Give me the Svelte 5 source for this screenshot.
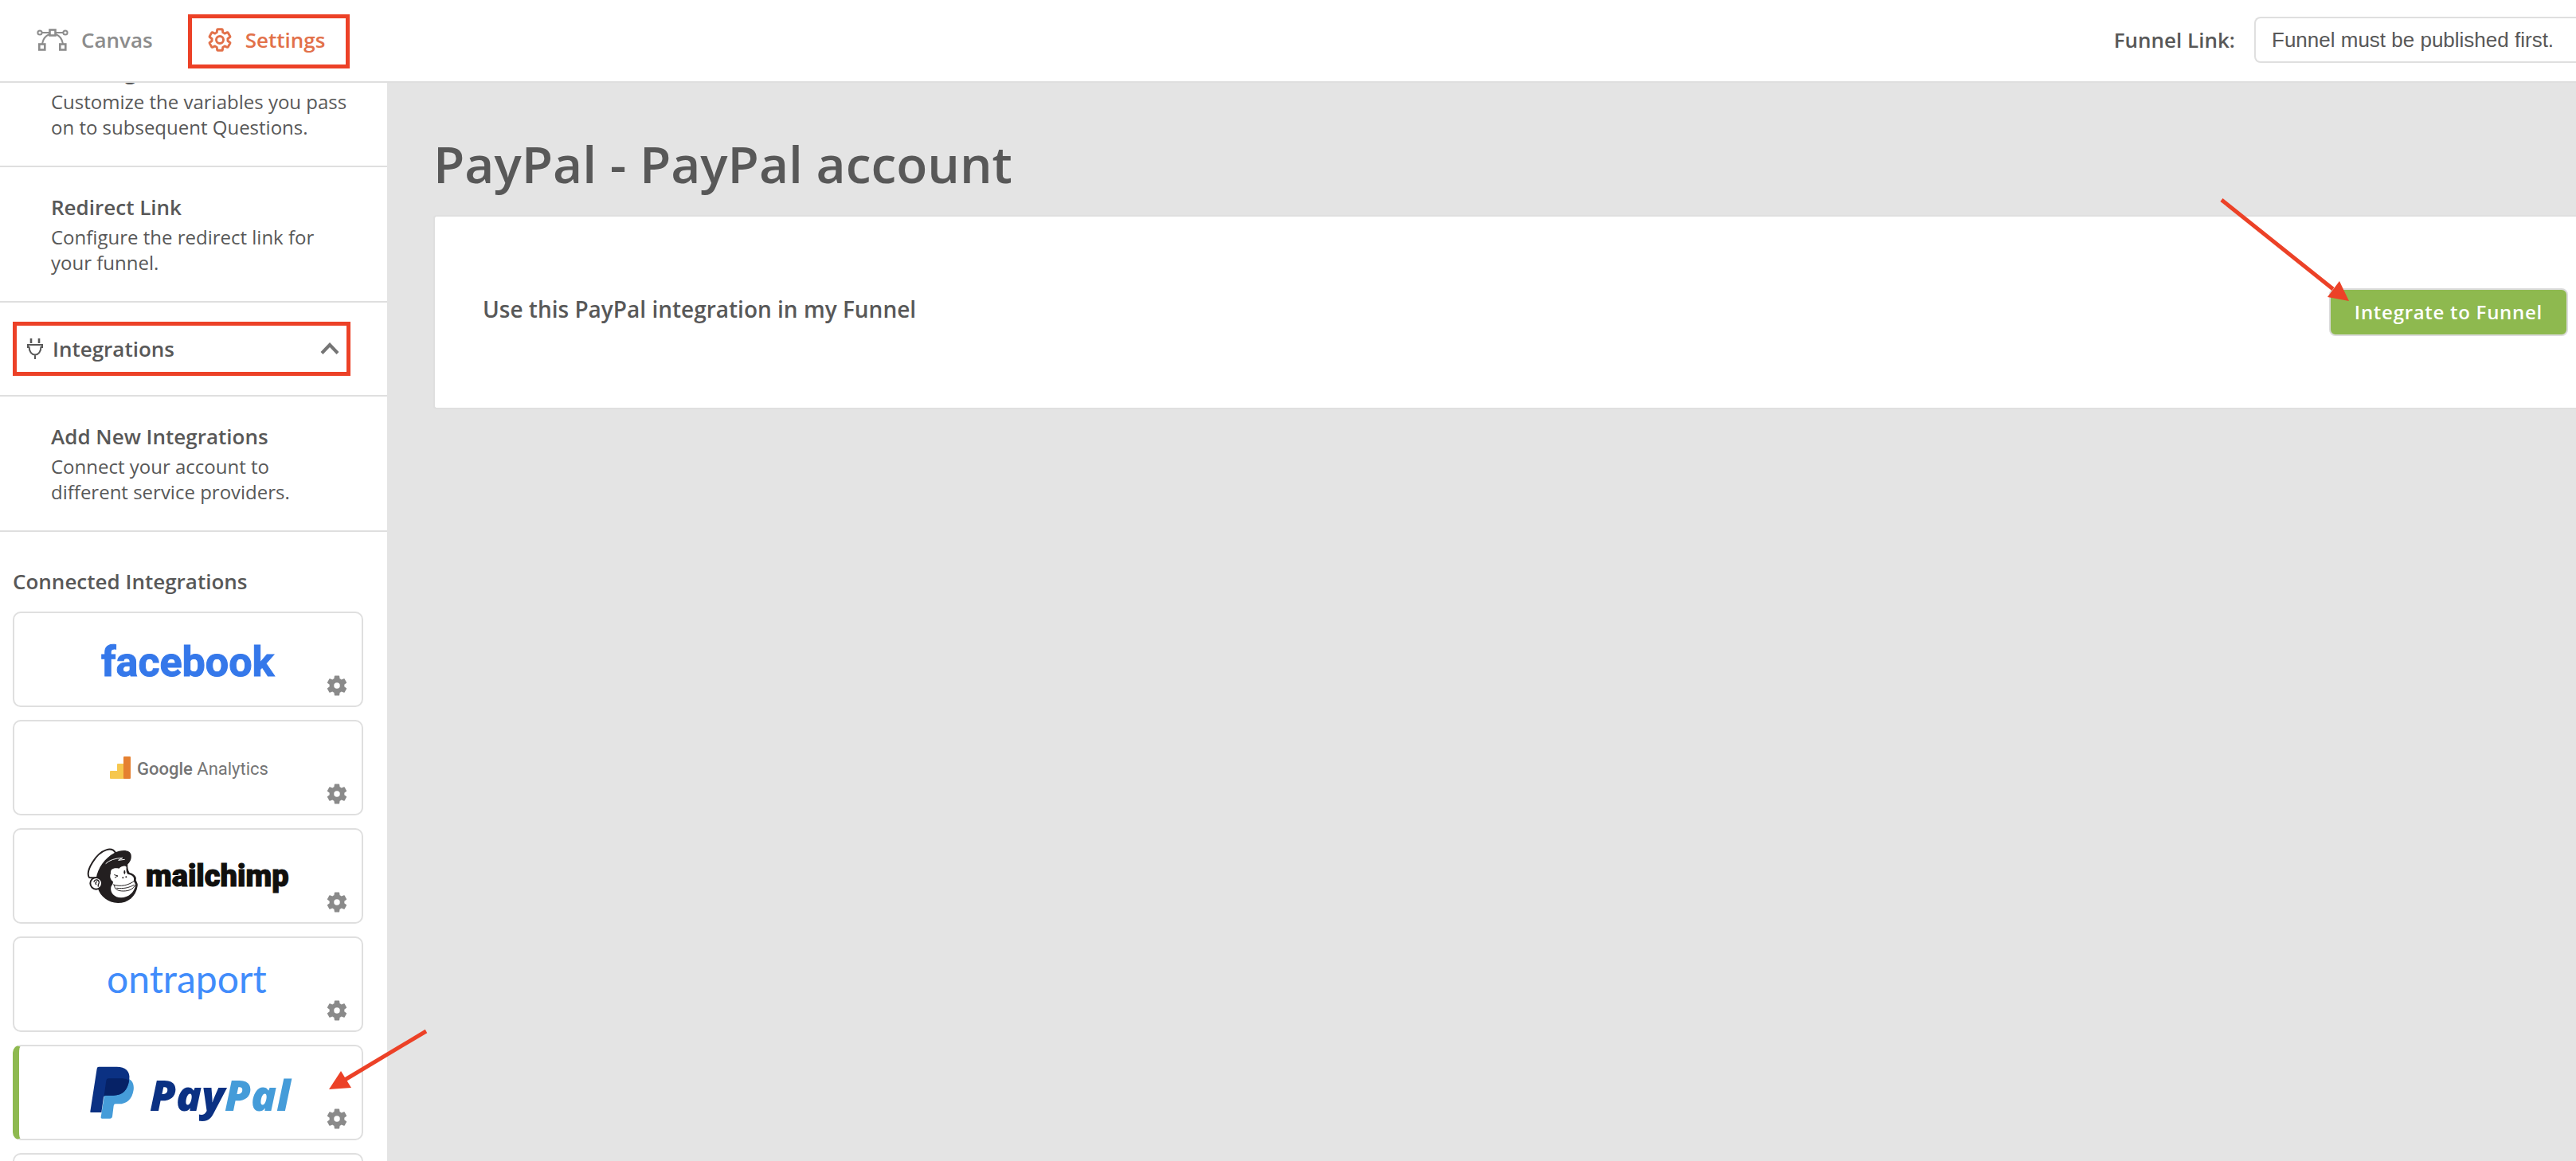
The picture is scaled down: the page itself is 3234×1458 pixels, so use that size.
<script>
  const gearPath =
    'M19.43 12.98c.04-.32.07-.64.07-.98s-.03-.66-.07-.98l2.11-1.65c.19-.15.24-.42.12-.64l-2-3.46c-.12-.22-.39-.3-.61-.22l-2.49 1c-.52-.4-1.08-.73-1.69-.98l-.38-2.65C14.46 2.18 14.25 2 14 2h-4c-.25 0-.46.18-.49.42l-.38 2.65c-.61.25-1.17.59-1.69.98l-2.49-1c-.23-.09-.49 0-.61.22l-2 3.46c-.13.22-.07.49.12.64l2.11 1.65c-.04.32-.07.65-.07.98s.03.66.07.98l-2.11 1.65c-.19.15-.24.42-.12.64l2 3.46c.12.22.39.3.61.22l2.49-1c.52.4 1.08.73 1.69.98l.38 2.65c.03.24.24.42.49.42h4c.25 0 .46-.18.49-.42l.38-2.65c.61-.25 1.17-.59 1.69-.98l2.49 1c.23.09.49 0 .61-.22l2-3.46c.12-.22.07-.49-.12-.64l-2.11-1.65z';

  const funnelSections = [
    { title: 'Tracking', text: 'Customize the variables you pass on to subsequent Questions.' },
    { title: 'Redirect Link', text: 'Configure the redirect link for your funnel.' }
  ];

  const integrations = ['facebook', 'analytics', 'mailchimp', 'ontraport', 'paypal', 'next'];

  let selected = $state('paypal');
  let open = $state(true);
  let funnelLink = $state('Funnel must be published first.');
</script>

<div class="page">
  <header class="topbar">
    <nav class="tabs">
      <a class="tab" href="#canvas">
        <svg width="40" height="36" viewBox="0 0 40 36" fill="none" stroke="currentColor" stroke-width="2">
          <circle cx="4" cy="9" r="2.6" />
          <circle cx="36" cy="9" r="2.6" />
          <path d="M7 9h9M24 9h9M16 11C11 13 8 17 7 23M24 11c5 2 8 6 9 12" />
          <rect x="16.5" y="5.5" width="7" height="7" stroke-width="2.6" />
          <rect x="3.3" y="23.5" width="7" height="7" stroke-width="2.6" />
          <rect x="29.3" y="23.5" width="7" height="7" stroke-width="2.6" />
        </svg>
        Canvas
      </a>
      <a class="tab active marked" href="#settings">
        <svg width="32" height="32" viewBox="0 0 24 24" fill="none" stroke="currentColor" stroke-width="2.2" stroke-linejoin="round">
          <path d={gearPath} />
          <circle cx="12" cy="12" r="3.4" />
        </svg>
        Settings
      </a>
    </nav>
    <div class="link-field">
      <label for="funnel-link">Funnel Link:</label>
      <input id="funnel-link" type="text" readonly bind:value={funnelLink} />
    </div>
  </header>

  <div class="body">
    <aside class="sidebar">
      <div class="sidebar-scroll">
        {#each funnelSections as section}
          <a class="section" href="#section">
            <h3>{section.title}</h3>
            <p>{section.text}</p>
          </a>
        {/each}

        <div class="group">
          <button class="group-toggle marked" aria-expanded={open} onclick={() => (open = !open)}>
            <svg width="20" height="28" viewBox="0 0 20 28" fill="none" stroke="currentColor" stroke-width="2">
              <path d="M5 1v6M15 1v6" stroke-width="2.6" />
              <path d="M1 13V9h18v4M2.500 11c0 7 3.500 10.500 7.500 10.500s7.500-3.500 7.500-10.500M10 21v6" />
            </svg>
            <span>Integrations</span>
            <svg class="chevron" width="24" height="16" viewBox="0 0 24 16" fill="none" stroke="#757575" stroke-width="4">
              <path d="M2 13.500 12 3l10 10.500" />
            </svg>
          </button>
        </div>

        {#if open}
          <a class="section" href="#add">
            <h3>Add New Integrations</h3>
            <p>Connect your account to different service providers.</p>
          </a>

          <div class="connected">
            <h3>Connected Integrations</h3>
            {#each integrations as name}
              <div class="card" class:selected={name === selected}>
                {#if name === 'facebook'}
                  <svg class="logo" width="218" height="44" viewBox="0 0 218 44">
                    <text class="facebook" x="0" y="43">facebook</text>
                  </svg>
                {:else if name === 'analytics'}
                  <svg class="logo" width="196" height="28" viewBox="0 0 196 28">
                    <path d="M1 18h8v-8q0-1 1-1h8v19H1q-1 0-1-1v-8q0-1 1-1z" fill="#f6c74e" />
                    <rect x="17" y="0" width="9" height="28" rx="1" fill="#e58030" />
                    <text class="analytics" x="34" y="23"><tspan class="google">Google</tspan> Analytics</text>
                  </svg>
                {:else if name === 'mailchimp'}
                  <svg class="logo" width="254" height="70" viewBox="0 0 254 70">
                    <svg width="66" height="70" viewBox="57 45 198 210">
                      <path
                        d="M66 156C50 132 92 64 130 52C148 46 158 50 166 64L96 158Z"
                        fill="#fff" stroke="#231f20" stroke-width="6" stroke-linejoin="round" />
                      <path
                        d="M92 160C98 120 126 82 160 64C190 48 222 52 224 72C226 88 218 100 211 106C210 118 212 130 218 138C236 142 246 154 242 166C246 176 250 180 248 188C242 228 212 252 174 252C138 252 108 228 98 196Z"
                        fill="#231f20" />
                      <path
                        d="M147 140C145 124 158 118 178 122C188 112 202 110 206 116C205 128 206 138 211 143C228 146 236 154 234 164C232 170 238 176 241 184C236 212 214 232 186 232C160 232 144 212 148 192C150 184 158 180 155 170C146 164 142 152 147 140Z"
                        fill="#fff" />
                      <path d="M128 104Q148 84 192 82L176 91L200 88" fill="none" stroke="#fff" stroke-width="3" />
                      <circle cx="92" cy="178" r="22" fill="#fff" stroke="#231f20" stroke-width="6" />
                      <path
                        d="M84 172C88 160 104 164 103 176C102 181 98 182 100 189M94 172Q87 176 92 182"
                        fill="none" stroke="#231f20" stroke-width="4" stroke-linecap="round" />
                      <path
                        d="M161 146L174 150L163 156M157 183C184 192 214 186 237 168M161 185C160 200 174 207 194 207C216 207 232 200 239 184M170 196C194 199 216 195 234 184"
                        fill="none" stroke="#231f20" stroke-width="3" stroke-linecap="round" />
                      <ellipse cx="199" cy="136" rx="3" ry="8" fill="#231f20" />
                      <circle cx="193" cy="157" r="3" fill="#231f20" />
                      <circle cx="205" cy="154" r="3" fill="#231f20" />
                    </svg>
                    <text class="mailchimp" x="74" y="48">mailchimp</text>
                  </svg>
                {:else if name === 'ontraport'}
                  <svg class="logo" width="204" height="32" viewBox="0 0 204 32">
                    <text class="ontraport" x="0" y="27">ontraport</text>
                  </svg>
                {:else if name === 'paypal'}
                  <svg class="logo" width="252" height="66" viewBox="0 0 252 66">
                    <svg width="55" height="66" viewBox="67 56 165 198">
                      <path
                        d="M131 102h69c25 0 34 22 31 43-5 35-26 53-56 53h-12q-6 0-7 7l-5 41q-1 7-8 7h-31q-5 0-4-6z"
                        fill="#459cd9" />
                      <path
                        d="M100 58h68c32 0 51 17 47 47-5 40-25 61-60 61h-30q-6 0-7 8l-8 56H70q-3 0-2-4L93 65q1-7 7-7z"
                        fill="#0b3183" />
                      <path
                        d="M136 102h54q15 0 24 8c-5 37-25 56-59 56h-29q-4 0-6 2l8-58q1-8 8-8z"
                        fill="#062266" />
                    </svg>
                    <text class="paypal" x="75" y="56">Pay<tspan class="pal">Pal</tspan></text>
                  </svg>
                {/if}
                <button class="gear" aria-label="Configure {name}" onclick={() => (selected = name)}>
                  <svg width="30" height="30" viewBox="0 0 24 24">
                    <path d="{gearPath}M12 15a3 3 0 1 1 0-6 3 3 0 0 1 0 6z" fill="#8a8a8a" fill-rule="evenodd" />
                  </svg>
                </button>
              </div>
            {/each}
          </div>
        {/if}
      </div>
    </aside>

    <main class="content">
      <h1>PayPal - PayPal account</h1>
      <section class="panel">
        <p>Use this PayPal integration in my Funnel</p>
        <button class="integrate">Integrate to Funnel</button>
      </section>
    </main>
  </div>

  <svg class="arrow to-button" width="170" height="134" viewBox="0 0 170 134">
    <path d="M5 5l140 112" stroke="#ec4127" stroke-width="5" />
    <path d="M165 132l-12-25-15 20z" fill="#ec4127" />
  </svg>
  <svg class="arrow to-card" width="130" height="80" viewBox="0 0 130 80">
    <path d="M125 5L18 69" stroke="#ec4127" stroke-width="5" />
    <path d="M3 78l15-23 13 21z" fill="#ec4127" />
  </svg>
</div>

<style>
  :global(body) {
    overflow: hidden;
  }

  .page {
    position: relative;
    display: flex;
    flex-direction: column;
    height: 100vh;
    overflow: hidden;
    background: #e4e4e4;
    color: #585858;
    font-family: 'Open Sans', sans-serif;
    font-size: 26px;
    line-height: 36px;
  }

  h1,
  h3,
  p {
    margin: 0;
  }

  h1,
  h3 {
    font-weight: 600;
  }

  h3 {
    font-size: 26px;
  }

  a {
    color: inherit;
    text-decoration: none;
  }

  button {
    font: inherit;
    color: inherit;
    cursor: pointer;
  }

  svg {
    display: block;
    flex-shrink: 0;
  }

  .topbar {
    display: flex;
    align-items: center;
    justify-content: space-between;
    box-sizing: border-box;
    height: 104px;
    padding: 0 0 2px 46px;
    border-bottom: 2px solid #dfdfdf;
    background: #fff;
    font-weight: 600;
  }

  .tabs {
    display: flex;
    gap: 68px;
  }

  .tab {
    display: flex;
    align-items: center;
    gap: 16px;
    color: #8c8c8c;
  }

  .tab.active {
    color: #e2714a;
  }

  .marked {
    position: relative;
  }

  .marked::after {
    content: '';
    position: absolute;
    border: 5px solid #ec4127;
  }

  .tab.marked::after {
    inset: -14px -31px -18px -24px;
  }

  .link-field {
    display: flex;
    align-items: center;
    gap: 24px;
  }

  .link-field input {
    box-sizing: border-box;
    width: 404px;
    height: 58px;
    padding: 0 0 0 20px;
    border: 2px solid #dfdfdf;
    border-right: none;
    border-radius: 8px 0 0 8px;
    outline: none;
    background: #fff;
    color: #585858;
    font-family: 'Liberation Sans', Arial, sans-serif;
    font-size: 26px;
  }

  .body {
    display: flex;
    flex: 1;
    min-height: 0;
  }

  .sidebar {
    flex: 0 0 486px;
    overflow: hidden;
    background: #fff;
  }

  /* list is scrolled part of the way down its first entry */
  .sidebar-scroll {
    margin-top: -64px;
  }

  .section {
    display: flex;
    flex-direction: column;
    gap: 4px;
    padding: 32px 48px 32px 64px;
    border-bottom: 2px solid #dfdfdf;
  }

  .section p {
    font-size: 24px;
    line-height: 32px;
  }

  .group {
    padding: 24px 46px 24px 16px;
    border-bottom: 2px solid #dfdfdf;
  }

  .group-toggle {
    display: flex;
    align-items: center;
    gap: 12px;
    width: 100%;
    height: 68px;
    padding: 0 14px 0 18px;
    border: none;
    background: none;
    font-weight: 600;
  }

  .group-toggle.marked::after {
    inset: 0;
  }

  .chevron {
    margin-left: auto;
  }

  .connected {
    display: flex;
    flex-direction: column;
    gap: 16px;
    padding: 44px 30px 16px 16px;
  }

  .connected h3 {
    padding-bottom: 4px;
  }

  .card {
    position: relative;
    display: flex;
    align-items: center;
    justify-content: center;
    box-sizing: border-box;
    height: 120px;
    border: 2px solid #dfdfdf;
    border-radius: 10px;
  }

  .card.selected {
    border-left: 8px solid #8eb94f;
  }

  .logo {
    overflow: visible;
  }

  .facebook {
    fill: #3578ea;
    stroke: #3578ea;
    font: 700 52px Roboto, sans-serif;
  }

  .analytics {
    fill: #757575;
    font: 400 22px Roboto, sans-serif;
  }

  .google {
    font-weight: 500;
  }

  .mailchimp {
    fill: #10100e;
    stroke: #10100e;
    font: 900 38px Roboto, sans-serif;
  }

  .ontraport {
    fill: #418cfb;
    font: 400 48px Lato, sans-serif;
  }

  .paypal {
    fill: #0b3183;
    font: italic 800 53px 'Open Sans', sans-serif;
  }

  .pal {
    fill: #459cd9;
  }

  .gear {
    position: absolute;
    right: 16px;
    bottom: 10px;
    padding: 0;
    border: none;
    background: none;
  }

  .content {
    flex: 1;
    min-width: 0;
    padding: 58px 0 0 58px;
  }

  h1 {
    padding-bottom: 20px;
    font-size: 64px;
    line-height: 88px;
  }

  .panel {
    display: flex;
    align-items: center;
    justify-content: space-between;
    height: 240px;
    padding: 0 10px 0 60px;
    border: 2px solid #dfdfdf;
    border-right: none;
    border-radius: 4px 0 0 4px;
    background: #fff;
  }

  .panel p {
    padding-bottom: 8px;
    font-size: 28px;
    font-weight: 600;
  }

  .integrate {
    height: 60px;
    padding: 0 30px;
    border: 2px solid #dcdcdc;
    border-radius: 8px;
    background: #8eb94f;
    color: #fff;
    font-size: 24px;
    font-weight: 600;
    letter-spacing: 0.03em;
  }

  .arrow {
    position: absolute;
    fill: none;
    pointer-events: none;
  }

  .to-button {
    top: 246px;
    right: 280px;
  }

  .to-card {
    top: 1290px;
    left: 410px;
  }
</style>
